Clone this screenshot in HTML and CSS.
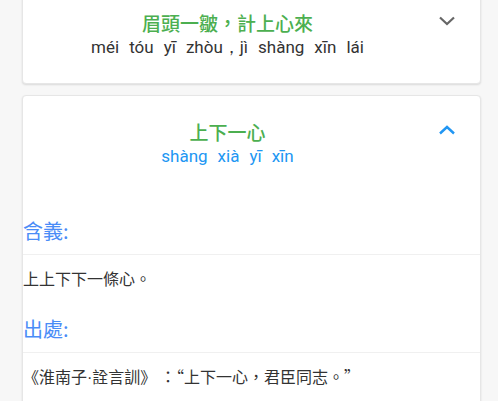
FILE: index.html
```html
<!DOCTYPE html>
<html lang="zh-Hant">
<head>
<meta charset="utf-8">
<link rel="stylesheet" href="styles.css">
</head>
<body>
<div class="list">
  <div class="card">
    <div class="header">
      <div class="head-text">
        <div class="title">眉頭一皺，計上心來</div>
        <div class="pinyin"><span>méi</span><span>tóu</span><span>yī</span><span>zhòu，jì</span><span>shàng</span><span>xīn</span><span>lái</span></div>
      </div>
      <svg class="chev chev-down" width="24" height="24" viewBox="0 0 24 24"><polyline points="5,8.5 12,15 19,8.5" fill="none" stroke="#666" stroke-width="2.2"/></svg>
    </div>
  </div>
  <div class="card open">
    <div class="header">
      <div class="head-text">
        <div class="title">上下一心</div>
        <div class="pinyin blue"><span>shàng</span><span>xià</span><span>yī</span><span>xīn</span></div>
      </div>
      <svg class="chev chev-up" width="24" height="24" viewBox="0 0 24 24"><polyline points="5,15.5 12,9 19,15.5" fill="none" stroke="#2196f3" stroke-width="2.4"/></svg>
    </div>
    <div class="body">
      <div class="label">含義:</div>
      <div class="content">上上下下一條心。</div>
      <div class="label">出處:</div>
      <div class="content">《淮南子<span class="dot">·</span>詮言訓》 ：“上下一心，君臣同志。”</div>
    </div>
  </div>
</div>
</body>
</html>
```

FILE: styles.css
```css
html, body {
  margin: 0;
  padding: 0;
  background: #f7f7f7;
}
body {
  font-family: "Noto Sans CJK TC", "Noto Sans", sans-serif;
  overflow: hidden;
}
.list {
  margin: -14px 17px 0 22px;
  display: flex;
  flex-direction: column;
  gap: 11px;
}
.card {
  background: #fff;
  border: 1px solid #e6e6e6;
  border-radius: 4px;
  box-shadow: 0 1px 2px rgba(0,0,0,0.12);
}
.header {
  display: flex;
  align-items: flex-start;
  gap: 3px;
  padding: 23px 21px 23px 0;
}
.head-text {
  flex: 1;
  display: flex;
  flex-direction: column;
  align-items: center;
}
.title {
  color: #4caf50;
  font-size: 19px;
  font-weight: 500;
  line-height: 25px;
}
.pinyin {
  color: #333;
  font-family: Roboto, "Noto Sans", sans-serif;
  font-size: 17px;
  line-height: 25px;
  display: flex;
  gap: 10px;
}
.pinyin.blue {
  color: #2196f3;
}
.chev {
  flex: none;
  margin-top: -1px;
}
.body {
  padding-top: 19px;
}
.label {
  color: #4a8cf7;
  font-size: 20px;
  line-height: 40px;
  height: 44px;
  padding-bottom: 4px;
  border-bottom: 1px solid #f0f0f0;
  box-sizing: border-box;
}
.content {
  color: #333;
  font-size: 16px;
  line-height: 22px;
  padding: 12px 0 20px 0;
}
.dot {
  font-family: "Liberation Sans", sans-serif;
}
```
